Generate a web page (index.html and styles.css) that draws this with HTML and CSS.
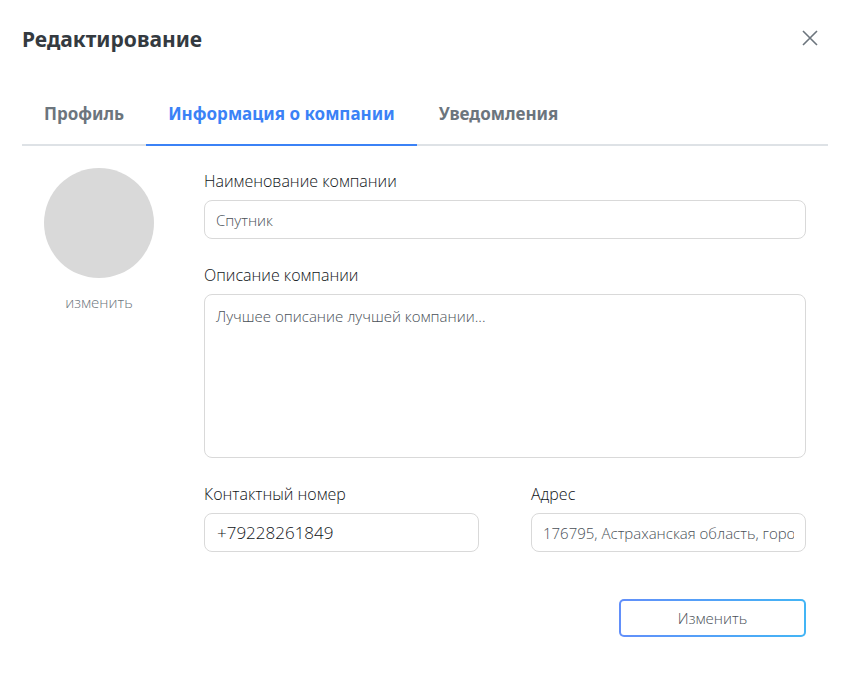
FILE: index.html
```html
<!DOCTYPE html>
<html lang="ru">
<head>
<meta charset="utf-8">
<meta name="viewport" content="width=device-width, initial-scale=1">
<title>Редактирование</title>
<link rel="stylesheet" href="styles.css">
</head>
<body>
<main class="dialog">
  <header class="dialog-header">
    <h1 class="dialog-title">Редактирование</h1>
    <button class="close" type="button" aria-label="Закрыть">
      <svg viewBox="0 0 16 16" width="16" height="16" aria-hidden="true"><path d="M1 1l14 14M15 1L1 15" fill="none" stroke="currentColor" stroke-width="1.6"/></svg>
    </button>
  </header>
  <nav class="tabs">
    <a class="tab" href="#profile">Профиль</a>
    <a class="tab active" href="#company">Информация о компании</a>
    <a class="tab" href="#notifications">Уведомления</a>
  </nav>
  <form class="content">
    <div class="avatar-column">
      <div class="avatar"></div>
      <button class="avatar-change" type="button">изменить</button>
    </div>
    <div class="fields">
      <div class="field">
        <label for="name">Наименование компании</label>
        <input id="name" type="text" value="Спутник">
      </div>
      <div class="field">
        <label for="about">Описание компании</label>
        <textarea id="about">Лучшее описание лучшей компании...</textarea>
      </div>
      <div class="field-row">
        <div class="field">
          <label for="phone">Контактный номер</label>
          <input class="phone" id="phone" type="tel" value="+79228261849">
        </div>
        <div class="field">
          <label for="address">Адрес</label>
          <input id="address" type="text" value="176795, Астраханская область, город Москва">
        </div>
      </div>
      <button class="submit" type="submit">Изменить</button>
    </div>
  </form>
</main>
</body>
</html>
```
FILE: styles.css
```css
* {
  box-sizing: border-box;
}

body {
  margin: 0;
  background: #fff;
  color: #495057;
  font-family: "Open Sans", "Noto Sans", sans-serif;
  font-size: 16px;
  font-weight: 300;
  line-height: 24px;
}

button,
input,
textarea {
  font: inherit;
  color: inherit;
}

.dialog {
  padding: 22px 20px 44px 22px;
}

.dialog-header {
  display: flex;
  align-items: center;
  justify-content: space-between;
  height: 34px;
}

.dialog-title {
  margin: 0;
  color: #343a40;
  font-family: "Noto Sans", sans-serif;
  font-size: 21px;
  font-weight: 700;
}

.close {
  display: flex;
  padding: 8px 10px 10px;
  border: 0;
  background: none;
  color: #6c757d;
}

.tabs {
  display: flex;
  margin-top: 28px;
  border-bottom: 2px solid #dee2e6;
}

.tab {
  margin-bottom: -2px;
  padding: 18px 22px;
  border-bottom: 2px solid transparent;
  color: #6c757d;
  font-family: "Noto Sans", sans-serif;
  font-size: 17px;
  font-weight: 700;
  text-decoration: none;
}

.tab.active {
  border-color: #3b82f6;
  color: #3b82f6;
}

.content {
  display: flex;
  gap: 50px;
  padding: 22px 22px 0;
}

.avatar-column {
  display: flex;
  flex: none;
  flex-direction: column;
  align-items: center;
}

.avatar {
  width: 110px;
  height: 110px;
  border-radius: 50%;
  background: #d9d9d9;
}

.avatar-change {
  margin-top: 12px;
  padding: 0;
  border: 0;
  background: none;
  color: #6c757d;
  font-size: 15px;
}

.fields {
  display: flex;
  flex: 1;
  flex-direction: column;
  gap: 24px;
  min-width: 0;
  padding-top: 1px;
}

.field {
  display: flex;
  flex-direction: column;
  gap: 7px;
  min-width: 0;
}

.field label {
  color: #101418;
}

.field input,
.field textarea {
  width: 100%;
  height: 39px;
  padding: 0 11px;
  border: 1px solid #d9d9d9;
  border-radius: 8px;
  background: #fff;
  font-size: 15px;
}

.field textarea {
  display: block;
  height: 164px;
  padding: 9px 11px;
  resize: none;
}

.field .phone {
  padding: 0 12px;
  color: #101418;
  font-size: 17px;
}

.field-row {
  display: grid;
  grid-template-columns: 1fr 1fr;
  gap: 52px;
}

.submit {
  align-self: flex-end;
  width: 187px;
  height: 38px;
  margin-top: 23px;
  border: 2px solid transparent;
  border-radius: 5px;
  background: linear-gradient(#fff, #fff) padding-box, linear-gradient(90deg, #628ffa, #43b5f5) border-box;
  font-size: 15px;
}
```
